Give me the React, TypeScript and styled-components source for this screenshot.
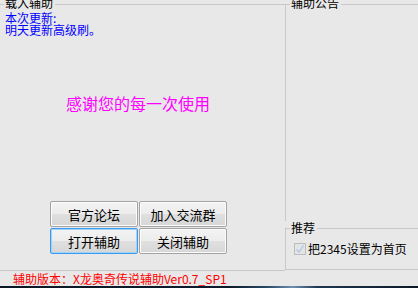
import * as React from "react";
import styled, { createGlobalStyle } from "styled-components";

const GlobalStyle = createGlobalStyle`
  html, body {
    margin: 0;
    padding: 0;
    background: #e8e8e8;
    overflow: hidden;
  }
  body {
    font-family: "Noto Sans CJK SC", "Noto Sans", sans-serif;
  }
`;

const LINE = "#c8c8c8";

const Window = styled.div`
  width: 418px;
  height: 288px;
  display: flex;
  flex-direction: column;
  background: #e8e8e8;
`;

const TopRow = styled.div`
  display: flex;
  height: 271px;
`;

const LoadGroup = styled.div`
  position: relative;
  box-sizing: border-box;
  width: 285px;
  height: 267px;
  margin-top: 4px;
  border-top: 1px solid ${LINE};
  border-bottom: 1px solid ${LINE};
  display: flex;
  flex-direction: column;
`;

const Legend = styled.span<{ $top?: number }>`
  position: absolute;
  left: 4px;
  top: ${(p) => (p.$top !== undefined ? p.$top : -8)}px;
  padding: 0 2px 0 1px;
  background: #e8e8e8;
  font-size: 12px;
  line-height: 12px;
  color: #000;
  white-space: nowrap;
`;

const Memo = styled.div`
  padding: 7px 0 0 5px;
  font-size: 12px;
  line-height: 12px;
  color: #0000ff;
`;

const Thanks = styled.div`
  margin-top: 59px;
  padding-left: 66px;
  font-size: 16px;
  line-height: 16px;
  color: #ff00ff;
  white-space: nowrap;
`;

const ButtonGrid = styled.div`
  margin: 90px 0 0 50px;
  display: grid;
  grid-template-columns: 88px 88px;
  grid-auto-rows: 26px;
  column-gap: 1px;
  row-gap: 1px;
`;

const WinButton = styled.button<{ $focused?: boolean }>`
  box-sizing: border-box;
  margin: 0;
  padding: 0;
  font-family: "Noto Sans CJK SC", sans-serif;
  font-size: 13px;
  line-height: 13px;
  color: #000;
  border: 1px solid ${(p) => (p.$focused ? "#3d99ee" : "#a3a3a3")};
  border-radius: 2px;
  background: linear-gradient(#f3f3f3 0%, #ececec 50%, #e0e0e0 51%, #d6d6d6 100%);
  box-shadow: inset 0 0 0 1px ${(p) => (p.$focused ? "#9fd3fa" : "#fcfcfc")};
  cursor: default;
`;

const RightCol = styled.div`
  width: 133px;
  display: flex;
  flex-direction: column;
`;

const NoticeGroup = styled.div`
  position: relative;
  box-sizing: border-box;
  height: 217px;
  margin-top: 4px;
  border-top: 1px solid ${LINE};
  border-left: 1px solid ${LINE};
`;

const RecommendGroup = styled.div`
  position: relative;
  box-sizing: border-box;
  height: 42px;
  margin-top: 7px;
  border-top: 1px solid ${LINE};
  border-left: 1px solid ${LINE};
  border-bottom: 1px solid ${LINE};
  padding: 14px 0 0 8px;
`;

const CheckRow = styled.label`
  display: flex;
  align-items: center;
  gap: 2px;
  font-size: 12px;
  line-height: 12px;
  color: #000;
`;

const CheckBox = styled.span`
  box-sizing: border-box;
  width: 12px;
  height: 12px;
  border: 1px solid #bdbdbd;
  background: #e4e4e4;
  display: flex;
  align-items: center;
  justify-content: center;
`;

const StatusBar = styled.div`
  height: 15px;
  box-sizing: border-box;
  padding: 2px 0 0 13px;
  font-size: 12px;
  line-height: 12px;
  color: #ff0000;
  white-space: nowrap;
`;

const Desktop = styled.div`
  height: 2px;
  background: linear-gradient(
    90deg,
    #0b1724 0%,
    #0d1b2b 55%,
    #2a4a66 64%,
    #6d8fae 70%,
    #1e3650 76%,
    #0c1827 100%
  );
`;

const App = () => {
  return (
    <Window>
      <GlobalStyle />
      <TopRow>
        <LoadGroup>
          <Legend>载入辅助</Legend>
          <Memo>
            本次更新:
            <br />
            明天更新高级刷。
          </Memo>
          <Thanks>感谢您的每一次使用</Thanks>
          <ButtonGrid>
            <WinButton>官方论坛</WinButton>
            <WinButton>加入交流群</WinButton>
            <WinButton $focused>打开辅助</WinButton>
            <WinButton>关闭辅助</WinButton>
          </ButtonGrid>
        </LoadGroup>
        <RightCol>
          <NoticeGroup>
            <Legend $top={-8}>辅助公告</Legend>
          </NoticeGroup>
          <RecommendGroup>
            <Legend $top={-7}>推荐</Legend>
            <CheckRow>
              <CheckBox>
                <svg width="10" height="10" viewBox="0 0 10 10">
                  <path d="M1.5 5.5 L4 8 L8.5 1.5" fill="none" stroke="#a9c4ec" strokeWidth="1.2" />
                </svg>
              </CheckBox>
              把2345设置为首页
            </CheckRow>
          </RecommendGroup>
        </RightCol>
      </TopRow>
      <StatusBar>辅助版本：X龙奥奇传说辅助Ver0.7_SP1</StatusBar>
      <Desktop />
    </Window>
  );
};

export default App;
